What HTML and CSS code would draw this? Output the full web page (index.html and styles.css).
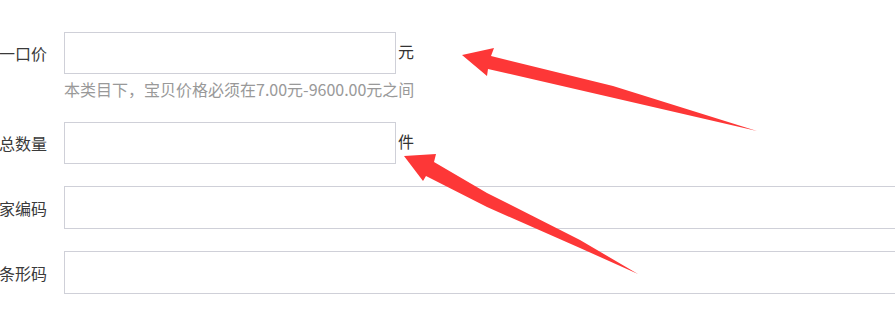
FILE: index.html
```html
<!DOCTYPE html>
<html lang="zh-CN">
<head>
<meta charset="utf-8">
<title>宝贝信息</title>
<link rel="stylesheet" href="styles.css">
</head>
<body>
<div class="page">
  <form class="form">
    <div class="row">
      <label class="label">一口价</label>
      <div class="field">
        <input class="input input-short" type="text">
        <span class="unit">元</span>
      </div>
    </div>
    <div class="help">本类目下，宝贝价格必须在7.00元-9600.00元之间</div>
    <div class="row">
      <label class="label">总数量</label>
      <div class="field">
        <input class="input input-short" type="text">
        <span class="unit">件</span>
      </div>
    </div>
    <div class="row row-tall">
      <label class="label">家编码</label>
      <div class="field">
        <input class="input input-long" type="text">
      </div>
    </div>
    <div class="row row-tall">
      <label class="label">条形码</label>
      <div class="field">
        <input class="input input-long" type="text">
      </div>
    </div>
  </form>
  <svg class="arrows" width="895" height="334" viewBox="0 0 895 334" aria-hidden="true">
    <polygon class="arrow" points="462,55 494,48 491,56 613,86 757,131 488,69 487,76"/>
    <polygon class="arrow" points="404,156 436,154 434,162 487,193 580,240 638,274 580,248 487,207 426,176 423,181"/>
  </svg>
</div>
</body>
</html>
```

FILE: styles.css
```css
html, body {
  margin: 0;
  padding: 0;
  background: #ffffff;
}

.page {
  position: relative;
  width: 895px;
  height: 334px;
  overflow: hidden;
  font-family: "Noto Sans CJK SC", "Noto Sans", sans-serif;
}

.form {
  display: flex;
  flex-direction: column;
  padding-top: 32px;
}

.row {
  display: flex;
  align-items: center;
  height: 42px;
  gap: 17px;
}

.row-tall {
  height: 43px;
  margin-top: 22px;
}

.label {
  width: 47px;
  flex: none;
  text-align: right;
  white-space: nowrap;
  font-size: 16px;
  color: #3a3a3a;
  direction: rtl;
  overflow: hidden;
}

.field {
  display: flex;
  align-items: center;
  height: 100%;
  gap: 2px;
}

.input {
  box-sizing: border-box;
  height: 100%;
  margin: 0;
  padding: 0 8px;
  border: 1px solid #cfd0d8;
  border-radius: 0;
  background: #ffffff;
  outline: none;
}

.input-short {
  width: 332px;
}

.input-long {
  width: 860px;
}

.unit {
  font-size: 16px;
  color: #333333;
  margin-top: -4px;
}

.help {
  padding-left: 64px;
  padding-top: 3px;
  height: 45px;
  line-height: 24px;
  font-size: 16px;
  color: #999999;
  white-space: nowrap;
}

.arrows {
  position: absolute;
  left: 0;
  top: 0;
  pointer-events: none;
}

.arrow {
  fill: #fd3737;
}
```
